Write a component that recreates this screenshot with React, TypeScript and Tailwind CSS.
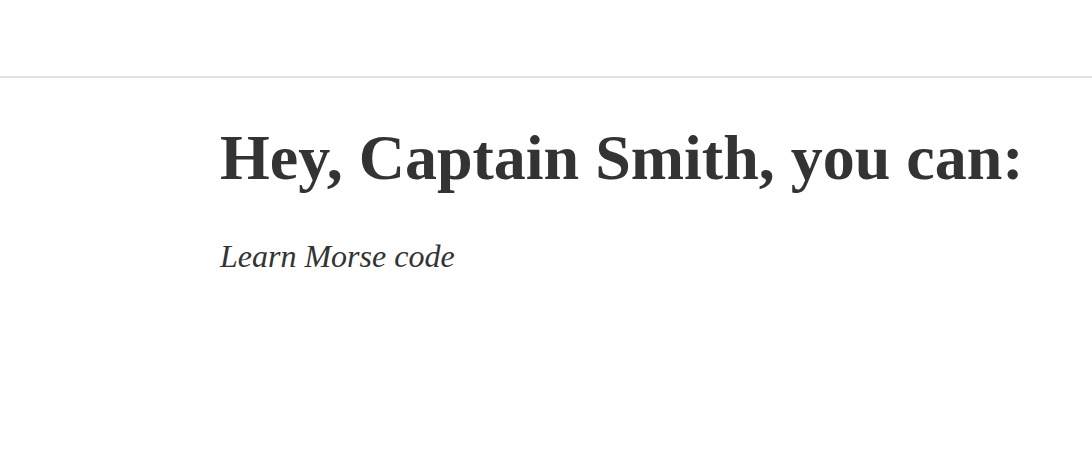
export default function App() {
  return (
    <div className="min-h-[449px] bg-white text-[#333333]" style={{ fontFamily: '"Liberation Serif", "Times New Roman", serif' }}>
      <div className="h-[78px] border-b-2 border-[#e2e2e2]"></div>
      <main className="pl-[220px] pt-[40px]">
        <h1 className="text-[64px] font-bold leading-[80px]">Hey, Captain Smith, you can:</h1>
        <p className="mt-[40px] text-[32px] italic leading-[36px]">Learn Morse code</p>
      </main>
    </div>
  );
}
